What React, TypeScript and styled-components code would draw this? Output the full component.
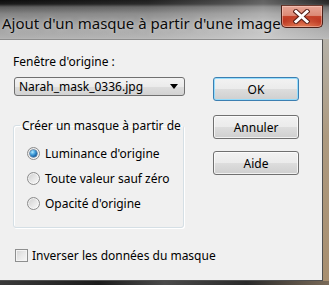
import React from "react";
import styled, { createGlobalStyle } from "styled-components";

const Global = createGlobalStyle`
  html, body { margin: 0; padding: 0; width: 329px; height: 285px; overflow: hidden; background: #161616; }
  #root { width: 329px; height: 285px; }
  * { box-sizing: border-box; }
`;

const UI_FONT = `"Noto Sans", "Open Sans", "DejaVu Sans", sans-serif`;

const Window = styled.div`
  width: 329px;
  height: 285px;
  display: flex;
  flex-direction: column;
  font-family: ${UI_FONT};
`;

const TitleBar = styled.div`
  height: 39px;
  display: flex;
  justify-content: space-between;
  align-items: flex-start;
  padding-right: 6px;
  background:
    linear-gradient(to right, rgba(255,255,255,0) 0%, rgba(255,255,255,0.08) 45%, rgba(255,255,255,0.25) 70%, rgba(255,255,255,0.35) 80%, rgba(255,255,255,0.1) 100%),
    linear-gradient(to bottom, #0c0c0c 0px, #1a1a1a 4px, #5c5c5c 7px, #858585 14px, #9d9d9d 26px, #b0b0b0 38px, #b8b8b8 39px);
`;

const Title = styled.div`
  padding: 13px 0 0 2px;
  font-size: 15px;
  line-height: 20px;
  color: #0a0a0a;
  text-shadow: 0 0 6px rgba(255,255,255,0.55), 0 0 2px rgba(255,255,255,0.35);
  white-space: nowrap;
`;

const CloseButton = styled.div`
  margin-top: 5px;
  width: 56px;
  height: 23px;
  border: 1px solid #4b2018;
  border-top-color: #6b3a2e;
  border-radius: 0 0 5px 5px;
  background:
    radial-gradient(ellipse 60% 50% at 50% 100%, rgba(255,170,120,0.55), rgba(255,170,120,0) 100%),
    linear-gradient(to bottom, #e7a595 0%, #dc8a76 45%, #c4432a 50%, #bb3520 75%, #c64a2e 100%);
  box-shadow: inset 0 0 0 1px rgba(255,220,210,0.45);
  display: flex;
  align-items: center;
  justify-content: center;
`;

const Middle = styled.div`
  flex: 1;
  display: flex;
`;

const Client = styled.div`
  width: 323px;
  background: #f0f0f0;
  border-top: 1px solid #8d8d8d;
  border-right: 1px solid #505050;
  border-bottom: 1px solid #505050;
  display: flex;
  padding: 14px 0 0 13px;
  font-size: 12px;
  color: #000;
`;

const RightFrame = styled.div`
  flex: 1;
  background: linear-gradient(to bottom, #b5b1a8 0%, #ad9a80 40%, #a88f70 100%);
`;

const BottomFrame = styled.div`
  height: 4px;
  background: linear-gradient(to right, #3a3a3a 0%, #1c1c1c 30%, #4a4a4a 50%, #2a2a2a 75%, #7a6a58 100%);
`;

const LeftCol = styled.div`
  width: 172px;
  display: flex;
  flex-direction: column;
`;

const Label = styled.div`
  line-height: 16px;
  white-space: nowrap;
`;

const Select = styled.div`
  margin: 7px 0 0 1px;
  width: 171px;
  height: 19px;
  border: 1px solid #707070;
  border-radius: 3px;
  background: linear-gradient(to bottom, #f3f3f3 0%, #ebebeb 50%, #dddddd 51%, #d2d2d2 100%);
  display: flex;
  align-items: center;
  justify-content: space-between;
  padding: 0 6px 0 4px;
  line-height: 15px;
`;

const Arrow = styled.span`
  width: 0;
  height: 0;
  border-left: 4px solid transparent;
  border-right: 4px solid transparent;
  border-top: 5px solid #000;
`;

const Group = styled.fieldset`
  margin: 22px 0 0 0;
  padding: 0;
  width: 171px;
  border: 1px solid #d5dfe5;
  border-radius: 3px;
  box-shadow: inset 1px 1px 0 #fff, 1px 1px 0 #fff;
`;

const Legend = styled.legend`
  margin-left: 6px;
  padding: 0 2px;
  line-height: 15px;
  font-size: 12px;
  white-space: nowrap;
`;

const RadioList = styled.div`
  display: flex;
  flex-direction: column;
  gap: 10px;
  padding: 13px 0 16px 13px;
`;

const Row = styled.div`
  height: 15px;
  display: flex;
  align-items: center;
  line-height: 15px;
  white-space: nowrap;
`;

const Radio = styled.span<{ $checked?: boolean }>`
  width: 13px;
  height: 13px;
  margin-right: 5px;
  border-radius: 50%;
  border: 1px solid #8c8c8c;
  background: linear-gradient(135deg, #cdcdcd 0%, #e6e6e6 50%, #fafafa 100%);
  box-shadow: inset 0 0 0 1px rgba(255,255,255,0.6);
  display: flex;
  align-items: center;
  justify-content: center;
  flex: none;
  &::after {
    content: "";
    display: ${(p) => (p.$checked ? "block" : "none")};
    width: 7px;
    height: 7px;
    border-radius: 50%;
    background: radial-gradient(circle at 35% 30%, #b8ecff 0%, #4aa6e0 35%, #1664a8 70%, #0b3a6c 100%);
    box-shadow: 0 0 0 0.5px #1d4f7e;
  }
`;

const CheckRow = styled(Row)`
  margin: 20px 0 0 2px;
`;

const Checkbox = styled.span`
  width: 13px;
  height: 13px;
  margin-right: 4px;
  border: 1px solid #8e8f8f;
  background: linear-gradient(135deg, #d4d4d4 0%, #e8e8e8 50%, #f7f7f7 100%);
  box-shadow: inset 0 0 0 1px #f4f4f4;
  flex: none;
`;

const RightCol = styled.div`
  margin-left: 28px;
  display: flex;
  flex-direction: column;
`;

const Button = styled.div<{ $gap: number; $default?: boolean }>`
  margin-top: ${(p) => p.$gap}px;
  width: 86px;
  height: 24px;
  border: 1px solid ${(p) => (p.$default ? "#3c7fb1" : "#707070")};
  border-radius: 3px;
  background: linear-gradient(to bottom, #f2f2f2 0%, #ebebeb 50%, #dddddd 51%, #cfcfcf 100%);
  box-shadow: inset 0 0 0 1px ${(p) => (p.$default ? "rgba(140,220,255,0.9)" : "rgba(255,255,255,0.7)")};
  display: flex;
  align-items: center;
  justify-content: center;
  line-height: 15px;
`;

const CloseIcon = () => (
  <svg width="17" height="15" viewBox="0 0 17 15">
    <path d="M3 2.5 L14 12.5 M14 2.5 L3 12.5" stroke="#5a2018" strokeWidth="5" strokeLinecap="square" />
    <path d="M3 2.5 L14 12.5 M14 2.5 L3 12.5" stroke="#ffffff" strokeWidth="3" strokeLinecap="square" />
  </svg>
);

const radios = [
  { label: "Luminance d'origine", checked: true },
  { label: "Toute valeur sauf zéro", checked: false },
  { label: "Opacité d'origine", checked: false },
];

export default function App() {
  return (
    <>
      <Global />
      <Window>
        <TitleBar>
          <Title>Ajout d'un masque à partir d'une image</Title>
          <CloseButton>
            <CloseIcon />
          </CloseButton>
        </TitleBar>
        <Middle>
          <Client>
            <LeftCol>
              <Label>Fenêtre d'origine :</Label>
              <Select>
                <span>Narah_mask_0336.jpg</span>
                <Arrow />
              </Select>
              <Group>
                <Legend>Créer un masque à partir de</Legend>
                <RadioList>
                  {radios.map((r) => (
                    <Row key={r.label}>
                      <Radio $checked={r.checked} />
                      {r.label}
                    </Row>
                  ))}
                </RadioList>
              </Group>
              <CheckRow>
                <Checkbox />
                Inverser les données du masque
              </CheckRow>
            </LeftCol>
            <RightCol>
              <Button $gap={23} $default>OK</Button>
              <Button $gap={14}>Annuler</Button>
              <Button $gap={12}>Aide</Button>
            </RightCol>
          </Client>
          <RightFrame />
        </Middle>
        <BottomFrame />
      </Window>
    </>
  );
}
